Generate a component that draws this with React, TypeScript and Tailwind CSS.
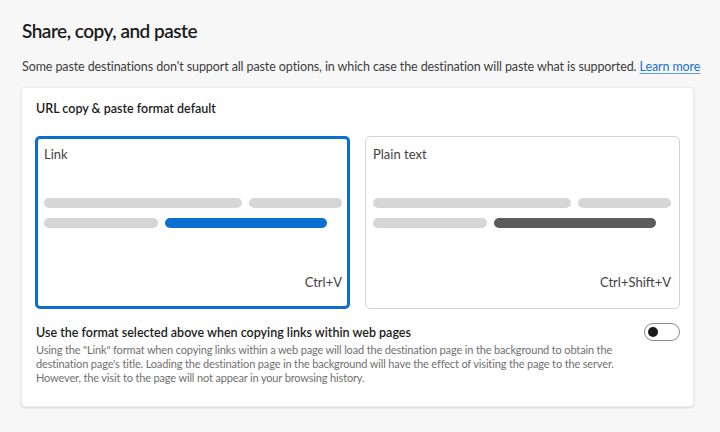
import React, { useState } from 'react';

const font = { fontFamily: 'Lato, "Open Sans", Arial, sans-serif' };

type Option = 'link' | 'plain';

const Bars: React.FC<{ accent: string }> = ({ accent }) => (
  <div className="flex flex-col gap-[10px] mt-[34px]">
    <div className="flex gap-[7px]">
      <div className="h-[10px] w-[198px] rounded-full bg-[#d6d6d6]" />
      <div className="h-[10px] flex-1 rounded-full bg-[#d6d6d6]" />
    </div>
    <div className="flex gap-[7px]">
      <div className="h-[10px] w-[114px] rounded-full bg-[#d6d6d6]" />
      <div className={`h-[10px] w-[162px] rounded-full ${accent}`} />
    </div>
  </div>
);

const App: React.FC = () => {
  const [selected, setSelected] = useState<Option>('link');
  const [useFormat, setUseFormat] = useState(false);

  return (
    <div className="w-[720px] h-[432px] bg-[#f7f7f7] pt-[17px] pl-[21px] overflow-hidden" style={font}>
      {/* Header */}
      <h1 className="text-[19px] leading-7 font-semibold tracking-[-0.5px] text-[#1b1b1b] pl-[1px]">Share, copy, and paste</h1>
      <p className="mt-[12px] text-[12.5px] leading-5 tracking-[-0.1px] text-[#3d3d3d] whitespace-nowrap pl-[1px]">
        Some paste destinations don't support all paste options, in which case the destination will paste what is supported.{' '}
        <a href="#" className="text-[#1872d0] underline underline-offset-2 decoration-[#5a9be0]">Learn more</a>
      </p>

      {/* Card */}
      <div className="mt-[10px] w-[673px] bg-white rounded-[4px] border border-[#ececec] shadow-[0_1px_2px_rgba(0,0,0,0.12)] px-[13px] pt-[11px] pb-[21px]">
        <div className="text-[12.5px] leading-5 font-semibold text-[#1b1b1b] pl-[1px]">URL copy &amp; paste format default</div>

        <div className="mt-[17px] flex gap-[15px]">
          <button
            onClick={() => setSelected('link')}
            className={`w-[315px] h-[173px] flex flex-col text-left rounded-[5px] bg-white ${
              selected === 'link'
                ? 'border-[3px] border-[#0b6fd2] pl-[6px] pr-[5px] pt-[5px] pb-[14px]'
                : 'border border-[#d4d4d4] pl-[7px] pr-[8px] pt-[7px] pb-[16px]'
            }`}
          >
            <span className="text-[13px] leading-5 text-[#424242]">Link</span>
            <Bars accent="bg-[#0b6fd2]" />
            <span className="mt-auto self-end text-[13px] leading-5 text-[#424242]">Ctrl+V</span>
          </button>

          <button
            onClick={() => setSelected('plain')}
            className={`w-[315px] h-[173px] flex flex-col text-left rounded-[5px] bg-white ${
              selected === 'plain'
                ? 'border-[3px] border-[#0b6fd2] pl-[6px] pr-[5px] pt-[5px] pb-[14px]'
                : 'border border-[#d4d4d4] pl-[7px] pr-[8px] pt-[7px] pb-[16px]'
            }`}
          >
            <span className="text-[13px] leading-5 text-[#424242]">Plain text</span>
            <Bars accent="bg-[#5c5c5c]" />
            <span className="mt-auto self-end text-[13px] leading-5 text-[#424242]">Ctrl+Shift+V</span>
          </button>
        </div>

        {/* Toggle row */}
        <div className="mt-[14px] flex items-start justify-between">
          <div className="min-w-0 pl-[1px]">
            <div className="text-[12.5px] leading-5 font-semibold text-[#1b1b1b]">
              Use the format selected above when copying links within web pages
            </div>
            <div className="text-[11px] leading-[14px] tracking-[-0.15px] text-[#707070] whitespace-nowrap">
              Using the "Link" format when copying links within a web page will load the destination page in the background to obtain the
              <br />
              destination page's title. Loading the destination page in the background will have the effect of visiting the page to the server.
              <br />
              However, the visit to the page will not appear in your browsing history.
            </div>
          </div>
          <button
            onClick={() => setUseFormat(!useFormat)}
            className={`shrink-0 w-[36px] h-[18px] rounded-full border flex items-center px-[3px] ${
              useFormat ? 'bg-[#0b6fd2] border-[#0b6fd2] justify-end' : 'bg-white border-[#8a8a8a] justify-start'
            }`}
          >
            <span className={`w-[10px] h-[10px] rounded-full ${useFormat ? 'bg-white' : 'bg-[#1b1b1b]'}`} />
          </button>
        </div>
      </div>
    </div>
  );
};

export default App;
